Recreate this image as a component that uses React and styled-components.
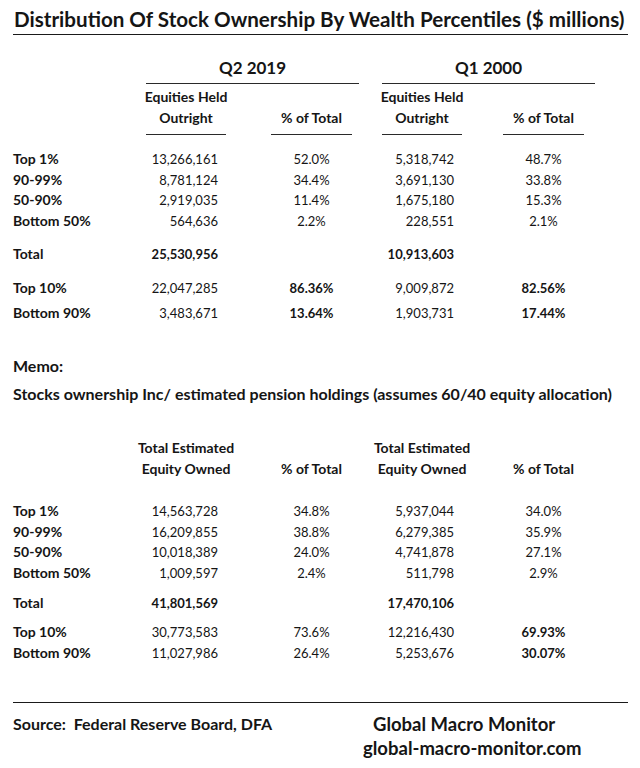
import React from "react";
import styled, { createGlobalStyle } from "styled-components";

const GlobalStyle = createGlobalStyle`
  * { box-sizing: border-box; }
  body {
    margin: 0;
    background: #fff;
  }
`;

const COLS =
  "[label-start] 133px [label-end c1-start] 80px [c1-end] 45px [c2-start] 81px [c2-end] 30px [c3-start] 80px [c3-end] 41px [c4-start] 81px [c4-end]";

const Page = styled.div`
  width: 640px;
  height: 768px;
  padding: 0 12px 0 13px;
  font-family: Lato, "Liberation Sans", sans-serif;
  color: #151515;
  overflow: hidden;
`;

const Title = styled.h1`
  margin: 0;
  padding: 7px 0 3px 1px;
  font-size: 20.6px;
  line-height: 24px;
  font-weight: 700;
  white-space: nowrap;
  border-bottom: 1.5px solid #1a1a1a;
`;

const Row = styled.div`
  display: grid;
  grid-template-columns: ${COLS};
  margin-top: ${(p) => p.$top || 0}px;
  font-size: 13px;
  line-height: 20.7px;
`;

const Period = styled.div`
  grid-column: ${(p) => p.$span};
  margin-right: ${(p) => -p.$over}px;
  padding-bottom: 4px;
  font-size: 17px;
  line-height: 22px;
  font-weight: 700;
  text-align: center;
  border-bottom: 1.5px solid #2a2a2a;
`;

const ColHead = styled.div`
  grid-column: ${(p) => p.$col};
  display: flex;
  flex-direction: column;
  justify-content: flex-end;
  align-items: center;
  padding-bottom: ${(p) => (p.$rule ? 6 : 0)}px;
  font-size: 14px;
  line-height: 21px;
  font-weight: 700;
  white-space: nowrap;
  border-bottom: ${(p) => (p.$rule ? "1.5px solid #2a2a2a" : "none")};
`;

const Label = styled.div`
  grid-column: label;
  font-weight: 700;
  font-size: 14px;
`;

const Num = styled.div`
  grid-column: ${(p) => p.$col};
  text-align: right;
  padding-right: 8px;
  font-weight: ${(p) => (p.$bold ? 700 : 400)};
`;

const Pct = styled.div`
  grid-column: ${(p) => p.$col};
  text-align: center;
  font-weight: ${(p) => (p.$bold ? 700 : 400)};
`;

const Note = styled.p`
  margin: ${(p) => p.$top}px 0 0;
  font-size: 16px;
  line-height: 21px;
  font-weight: 700;
  white-space: nowrap;
`;

const Footer = styled.div`
  margin-top: ${(p) => p.$top}px;
  padding-top: 10px;
  display: flex;
  border-top: 1.5px solid #1a1a1a;
`;

const Source = styled.div`
  width: 350px;
  font-size: 16px;
  line-height: 21px;
  font-weight: 700;
  white-space: pre;
`;

const Brand = styled.div`
  display: flex;
  flex-direction: column;
  font-weight: 700;
`;

const BrandLine = styled.div`
  margin-left: ${(p) => p.$indent}px;
  margin-top: ${(p) => p.$top || 0}px;
  font-size: 18.5px;
  line-height: 22px;
  white-space: nowrap;
`;

const outright = [
  ["Top 1%", "13,266,161", "52.0%", "5,318,742", "48.7%"],
  ["90-99%", "8,781,124", "34.4%", "3,691,130", "33.8%"],
  ["50-90%", "2,919,035", "11.4%", "1,675,180", "15.3%"],
  ["Bottom 50%", "564,636", "2.2%", "228,551", "2.1%"],
];

const outrightSummary = [
  { top: 12, cells: ["Total", "25,530,956", "", "10,913,603", ""], bold: [1, 3] },
  { top: 13, cells: ["Top 10%", "22,047,285", "86.36%", "9,009,872", "82.56%"], bold: [2, 4] },
  { top: 5, cells: ["Bottom 90%", "3,483,671", "13.64%", "1,903,731", "17.44%"], bold: [2, 4] },
];

const pension = [
  ["Top 1%", "14,563,728", "34.8%", "5,937,044", "34.0%"],
  ["90-99%", "16,209,855", "38.8%", "6,279,385", "35.9%"],
  ["50-90%", "10,018,389", "24.0%", "4,741,878", "27.1%"],
  ["Bottom 50%", "1,009,597", "2.4%", "511,798", "2.9%"],
];

const pensionSummary = [
  { top: 9, cells: ["Total", "41,801,569", "", "17,470,106", ""], bold: [1, 3] },
  { top: 9, cells: ["Top 10%", "30,773,583", "73.6%", "12,216,430", "69.93%"], bold: [4] },
  { top: 0, cells: ["Bottom 90%", "11,027,986", "26.4%", "5,253,676", "30.07%"], bold: [4] },
];

function DataRow({ cells, bold = [], top }) {
  const [label, a, b, c, d] = cells;
  return (
    <Row $top={top}>
      <Label>{label}</Label>
      <Num $col="c1" $bold={bold.includes(1)}>{a}</Num>
      <Pct $col="c2" $bold={bold.includes(2)}>{b}</Pct>
      <Num $col="c3" $bold={bold.includes(3)}>{c}</Num>
      <Pct $col="c4" $bold={bold.includes(4)}>{d}</Pct>
    </Row>
  );
}

function Block({ rows, summary, firstTop }) {
  return (
    <>
      {rows.map((r, i) => (
        <DataRow key={r[0]} cells={r} top={i === 0 ? firstTop : 0} />
      ))}
      {summary.map((s) => (
        <DataRow key={s.cells[0]} cells={s.cells} bold={s.bold} top={s.top} />
      ))}
    </>
  );
}

export default function App() {
  return (
    <Page>
      <GlobalStyle />
      <Title>Distribution Of Stock Ownership By Wealth Percentiles ($ millions)</Title>

      <Row $top={22}>
        <Period $span="c1-start / c2-end" $over={7}>Q2 2019</Period>
        <Period $span="c3-start / c4-end" $over={11}>Q1 2000</Period>
      </Row>
      <Row $top={2}>
        <ColHead $col="c1" $rule>
          <span>Equities Held</span>
          <span>Outright</span>
        </ColHead>
        <ColHead $col="c2" $rule>% of Total</ColHead>
        <ColHead $col="c3" $rule>
          <span>Equities Held</span>
          <span>Outright</span>
        </ColHead>
        <ColHead $col="c4" $rule>% of Total</ColHead>
      </Row>
      <Block rows={outright} summary={outrightSummary} firstTop={14} />

      <Note $top={31}>Memo:</Note>
      <Note $top={7}>
        Stocks ownership Inc/ estimated pension holdings (assumes 60/40 equity allocation)
      </Note>

      <Row $top={33}>
        <ColHead $col="c1">
          <span>Total Estimated</span>
          <span>Equity Owned</span>
        </ColHead>
        <ColHead $col="c2">% of Total</ColHead>
        <ColHead $col="c3">
          <span>Total Estimated</span>
          <span>Equity Owned</span>
        </ColHead>
        <ColHead $col="c4">% of Total</ColHead>
      </Row>
      <Block rows={pension} summary={pensionSummary} firstTop={22} />

      <Footer $top={38}>
        <Source>Source:  Federal Reserve Board, DFA</Source>
        <Brand>
          <BrandLine $indent={10}>Global Macro Monitor</BrandLine>
          <BrandLine $indent={0} $top={2}>global-macro-monitor.com</BrandLine>
        </Brand>
      </Footer>
    </Page>
  );
}
